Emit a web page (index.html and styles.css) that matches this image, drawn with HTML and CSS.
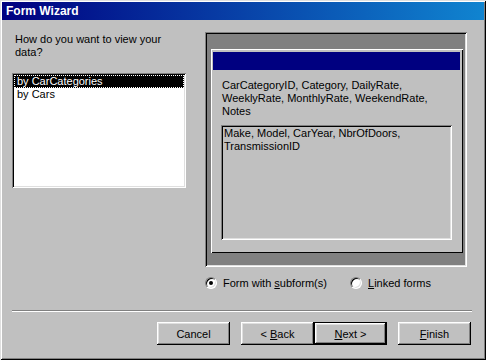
FILE: index.html
```html
<!DOCTYPE html>
<html lang="en">

<head>
    <meta charset="UTF-8">
    <meta name="viewport" content="width=device-width, initial-scale=1.0">
    <title>Form Wizard</title>
    <link rel="stylesheet" href="styles.css">
</head>

<body>
    <div class="window">
        <div class="titlebar">Form Wizard</div>

        <div class="main">
            <div class="left">
                <p class="prompt">How do you want to view your<br>data?</p>
                <ul class="listbox">
                    <li class="selected">by CarCategories</li>
                    <li>by Cars</li>
                </ul>
            </div>

            <div class="right">
                <div class="preview">
                    <div class="page">
                        <div class="page-head"></div>
                        <p class="fields">CarCategoryID, Category, DailyRate,<br>WeeklyRate, MonthlyRate, WeekendRate,<br>Notes</p>
                        <div class="subform">Make, Model, CarYear, NbrOfDoors,<br>TransmissionID</div>
                    </div>
                </div>
                <div class="options">
                    <label class="option first"><span class="radio checked"></span><span>Form with <u>s</u>ubform(s)</span></label>
                    <label class="option"><span class="radio"></span><span><u>L</u>inked forms</span></label>
                </div>
            </div>
        </div>

        <div class="separator"></div>

        <div class="buttons">
            <button class="btn">Cancel</button>
            <button class="btn back">&lt; <u>B</u>ack</button>
            <button class="btn default"><u>N</u>ext &gt;</button>
            <button class="btn finish"><u>F</u>inish</button>
        </div>
    </div>
</body>

</html>
```

FILE: styles.css
```css
* {
    margin: 0;
    padding: 0;
    box-sizing: border-box;
}

body {
    font-family: "Liberation Sans", Arial, sans-serif;
    font-size: 11px;
    color: #000;
    background: #c0c0c0;
}

.window {
    display: flex;
    flex-direction: column;
    width: 486px;
    height: 360px;
    padding: 2px;
    background: #c0c0c0;
    box-shadow: inset 1px 1px #dfdfdf, inset -1px -1px #000, inset 2px 2px #fff, inset -2px -2px #808080;
}

.titlebar {
    height: 18px;
    padding-left: 4px;
    line-height: 18px;
    font-size: 12px;
    font-weight: bold;
    color: #fff;
    background: linear-gradient(to right, #000080, #1084d0);
}

.main {
    display: flex;
    gap: 19px;
    padding: 12px 0 0 10px;
}

/* 左边：问题 + 列表 */
.left {
    width: 174px;
}

.prompt {
    margin-top: 1px;
    padding-left: 3px;
    line-height: 13px;
}

.listbox {
    height: 115px;
    margin-top: 14px;
    padding: 2px;
    list-style: none;
    background: #fff;
    box-shadow: inset 1px 1px #808080, inset -1px -1px #fff, inset 2px 2px #000, inset -2px -2px #dfdfdf;
}

.listbox li {
    padding-left: 3px;
    line-height: 13px;
}

.listbox li.selected {
    color: #fff;
    background: #000;
    outline: 1px dotted #fff;
    outline-offset: -1px;
}

/* 右边：预览 */
.right {
    width: 262px;
}

.preview {
    height: 235px;
    padding: 17px 4px 14px 6px;
    background: #808080;
    box-shadow: inset 1px 1px #808080, inset -1px -1px #fff, inset 2px 2px #000, inset -2px -2px #dfdfdf;
}

.page {
    height: 100%;
    padding: 3px 3px 3px 2px;
    background: #c0c0c0;
    box-shadow: inset 1px 1px #fff, inset -1px -1px #000;
}

.page-head {
    height: 18px;
    background: #000080;
}

.fields {
    margin-top: 9px;
    padding-left: 9px;
    line-height: 13px;
}

.subform {
    height: 115px;
    margin: 7px 8px 0 8px;
    padding: 2px 3px;
    line-height: 13px;
    box-shadow: inset 1px 1px #808080, inset -1px -1px #fff, inset 2px 2px #000, inset -2px -2px #dfdfdf;
}

.options {
    display: flex;
    align-items: center;
    height: 12px;
    margin-top: 10px;
}

.option {
    display: flex;
    align-items: center;
    gap: 6px;
}

.option.first {
    width: 145px;
}

.radio {
    position: relative;
    width: 12px;
    height: 12px;
    border: 1px solid;
    border-color: #808080 #fff #fff #808080;
    border-radius: 50%;
    background: #fff;
    box-shadow: inset 1px 1px #000, inset -1px -1px #dfdfdf;
}

.radio.checked::after {
    content: "";
    position: absolute;
    top: 3px;
    left: 3px;
    width: 4px;
    height: 4px;
    border-radius: 50%;
    background: #000;
}

/* 底部 */
.separator {
    width: 460px;
    height: 2px;
    margin: 21px 0 0 10px;
    border-top: 1px solid #808080;
    border-bottom: 1px solid #fff;
}

.buttons {
    display: flex;
    justify-content: flex-end;
    margin-top: 10px;
    padding-right: 13px;
}

.btn {
    width: 73px;
    height: 23px;
    border: none;
    font-family: inherit;
    font-size: 11px;
    color: #000;
    background: #c0c0c0;
    box-shadow: inset -1px -1px #000, inset 1px 1px #fff, inset -2px -2px #808080, inset 2px 2px #dfdfdf;
}

.btn.back {
    margin-left: 11px;
}

.btn.default {
    border: 1px solid #000;
}

.btn.finish {
    margin-left: 11px;
}
```
